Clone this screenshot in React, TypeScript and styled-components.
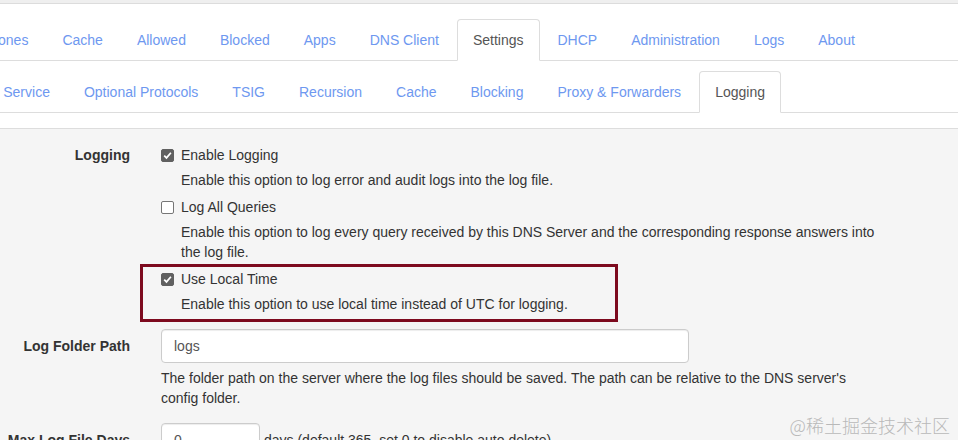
import React from "react";
import styled, { createGlobalStyle, css } from "styled-components";

const GlobalStyle = createGlobalStyle`
  html, body {
    margin: 0;
    padding: 0;
    background: #f5f5f5;
    overflow: hidden;
  }
  body {
    font-family: "Liberation Sans", Arial, sans-serif;
    font-size: 14px;
    line-height: 20px;
    color: #333;
  }
  *, *::before, *::after { box-sizing: border-box; }
`;

const Page = styled.div`
  position: relative;
  width: 958px;
  height: 440px;
  overflow: hidden;
  background: #f5f5f5;
`;

const TopStrip = styled.div`
  height: 4px;
  background: #efefef;
  border-bottom: 1px solid #dcdcdc;
`;

const Header = styled.header`
  background: #fff;
  padding: 15px 0 15px;
  border-bottom: 1px solid #dddddd;
`;

const Container = styled.div`
  margin-left: -129px;
  width: 1300px;
`;

const Tabs = styled.ul<{ $gapTop?: number }>`
  display: flex;
  list-style: none;
  margin: ${(p) => p.$gapTop ?? 0}px 0 0 0;
  padding: 0;
  border-bottom: 1px solid #dddddd;
`;

const TabItem = styled.li`
  margin: 0 2px -1px 0;
`;

const TabLink = styled.a<{ $active?: boolean }>`
  display: block;
  padding: 10px 15px;
  line-height: 20px;
  border: 1px solid transparent;
  border-radius: 4px 4px 0 0;
  color: #6e98f0;
  text-decoration: none;
  white-space: nowrap;
  cursor: pointer;
  ${(p) =>
    p.$active &&
    css`
      color: #555555;
      background: #fff;
      border-color: #dddddd #dddddd transparent;
    `}
`;

const Body = styled.div`
  padding-top: 10px;
`;

const FormGroup = styled.div<{ $mb?: number }>`
  display: grid;
  grid-template-columns: 259px 719px;
  column-gap: 31px;
  margin-bottom: ${(p) => p.$mb ?? 0}px;
`;

const Label = styled.label<{ $pt?: number }>`
  text-align: right;
  font-weight: bold;
  padding-top: ${(p) => p.$pt ?? 7}px;
  line-height: 20px;
`;

const Controls = styled.div``;

const CheckRow = styled.label<{ $mt?: number }>`
  display: flex;
  align-items: center;
  gap: 7px;
  margin-top: ${(p) => p.$mt ?? 0}px;
  line-height: 20px;
  cursor: pointer;
`;

const CheckBox = styled.span<{ $checked?: boolean }>`
  flex: none;
  width: 13px;
  height: 13px;
  border-radius: 2px;
  display: inline-flex;
  align-items: center;
  justify-content: center;
  ${(p) =>
    p.$checked
      ? css`
          background: #606060;
          border: 1px solid #606060;
        `
      : css`
          background: #fff;
          border: 1px solid #767676;
        `}
`;

const Help = styled.p<{ $indent?: number; $mb?: number }>`
  margin: 5px 0 ${(p) => p.$mb ?? 7}px;
  padding-left: ${(p) => p.$indent ?? 0}px;
  color: #333;
  line-height: 20px;
`;

const Highlight = styled.div`
  position: relative;
  &::before {
    content: "";
    position: absolute;
    left: -21px;
    top: -5px;
    width: 478px;
    height: 58px;
    border: 3px solid #7d0a1e;
    pointer-events: none;
  }
`;

const TextInput = styled.input<{ $w: number }>`
  display: inline-block;
  width: ${(p) => p.$w}px;
  height: 34px;
  padding: 6px 12px;
  font-family: "Liberation Sans", Arial, sans-serif;
  font-size: 14px;
  line-height: 20px;
  color: #555;
  background: #fff;
  border: 1px solid #cccccc;
  border-radius: 4px;
  box-shadow: inset 0 1px 1px rgba(0, 0, 0, 0.075);
  outline: none;
`;

const InlineRow = styled.div`
  display: flex;
  align-items: center;
  gap: 4px;
`;

const Watermark = styled.div`
  position: absolute;
  right: 8px;
  top: 414px;
  font-family: "Noto Sans CJK SC", sans-serif;
  font-size: 18px;
  line-height: 22px;
  font-weight: 300;
  color: #b9b9b9;
  pointer-events: none;
`;

const Check = ({ checked }: { checked?: boolean }) => (
  <CheckBox $checked={checked}>
    {checked && (
      <svg width="9" height="9" viewBox="0 0 9 9">
        <path d="M1.2 4.6 L3.5 6.9 L7.9 1.8" fill="none" stroke="#fff" strokeWidth="1.7" />
      </svg>
    )}
  </CheckBox>
);

const mainTabs = [
  "Dashboard",
  "Zones",
  "Cache",
  "Allowed",
  "Blocked",
  "Apps",
  "DNS Client",
  "Settings",
  "DHCP",
  "Administration",
  "Logs",
  "About",
];

const subTabs = [
  "General",
  "Web Service",
  "Optional Protocols",
  "TSIG",
  "Recursion",
  "Cache",
  "Blocking",
  "Proxy & Forwarders",
  "Logging",
];

export default function App() {
  return (
    <>
      <GlobalStyle />
      <Page>
        <TopStrip />
        <Header>
          <Container>
            <Tabs>
              {mainTabs.map((t) => (
                <TabItem key={t}>
                  <TabLink $active={t === "Settings"}>{t}</TabLink>
                </TabItem>
              ))}
            </Tabs>
            <Tabs $gapTop={10}>
              {subTabs.map((t) => (
                <TabItem key={t}>
                  <TabLink $active={t === "Logging"}>{t}</TabLink>
                </TabItem>
              ))}
            </Tabs>
          </Container>
        </Header>
        <Body>
          <Container>
            <FormGroup $mb={15}>
              <Label $pt={6}>Logging</Label>
              <Controls>
                <CheckRow $mt={6}>
                  <Check checked />
                  Enable Logging
                </CheckRow>
                <Help $indent={20}>Enable this option to log error and audit logs into the log file.</Help>
                <CheckRow>
                  <Check />
                  Log All Queries
                </CheckRow>
                <Help $indent={20}>
                  Enable this option to log every query received by this DNS Server and the corresponding response
                  answers into the log file.
                </Help>
                <Highlight>
                  <CheckRow>
                    <Check checked />
                    Use Local Time
                  </CheckRow>
                  <Help $indent={20} $mb={0}>
                    Enable this option to use local time instead of UTC for logging.
                  </Help>
                </Highlight>
              </Controls>
            </FormGroup>
            <FormGroup $mb={15}>
              <Label>Log Folder Path</Label>
              <Controls>
                <TextInput $w={528} defaultValue="logs" />
                <Help $mb={0}>
                  The folder path on the server where the log files should be saved. The path can be relative to the
                  DNS server's config folder.
                </Help>
              </Controls>
            </FormGroup>
            <FormGroup>
              <Label>Max Log File Days</Label>
              <Controls>
                <InlineRow>
                  <TextInput $w={99} defaultValue="0" />
                  <span>days (default 365, set 0 to disable auto delete)</span>
                </InlineRow>
              </Controls>
            </FormGroup>
          </Container>
        </Body>
        <Watermark>@稀土掘金技术社区</Watermark>
      </Page>
    </>
  );
}
